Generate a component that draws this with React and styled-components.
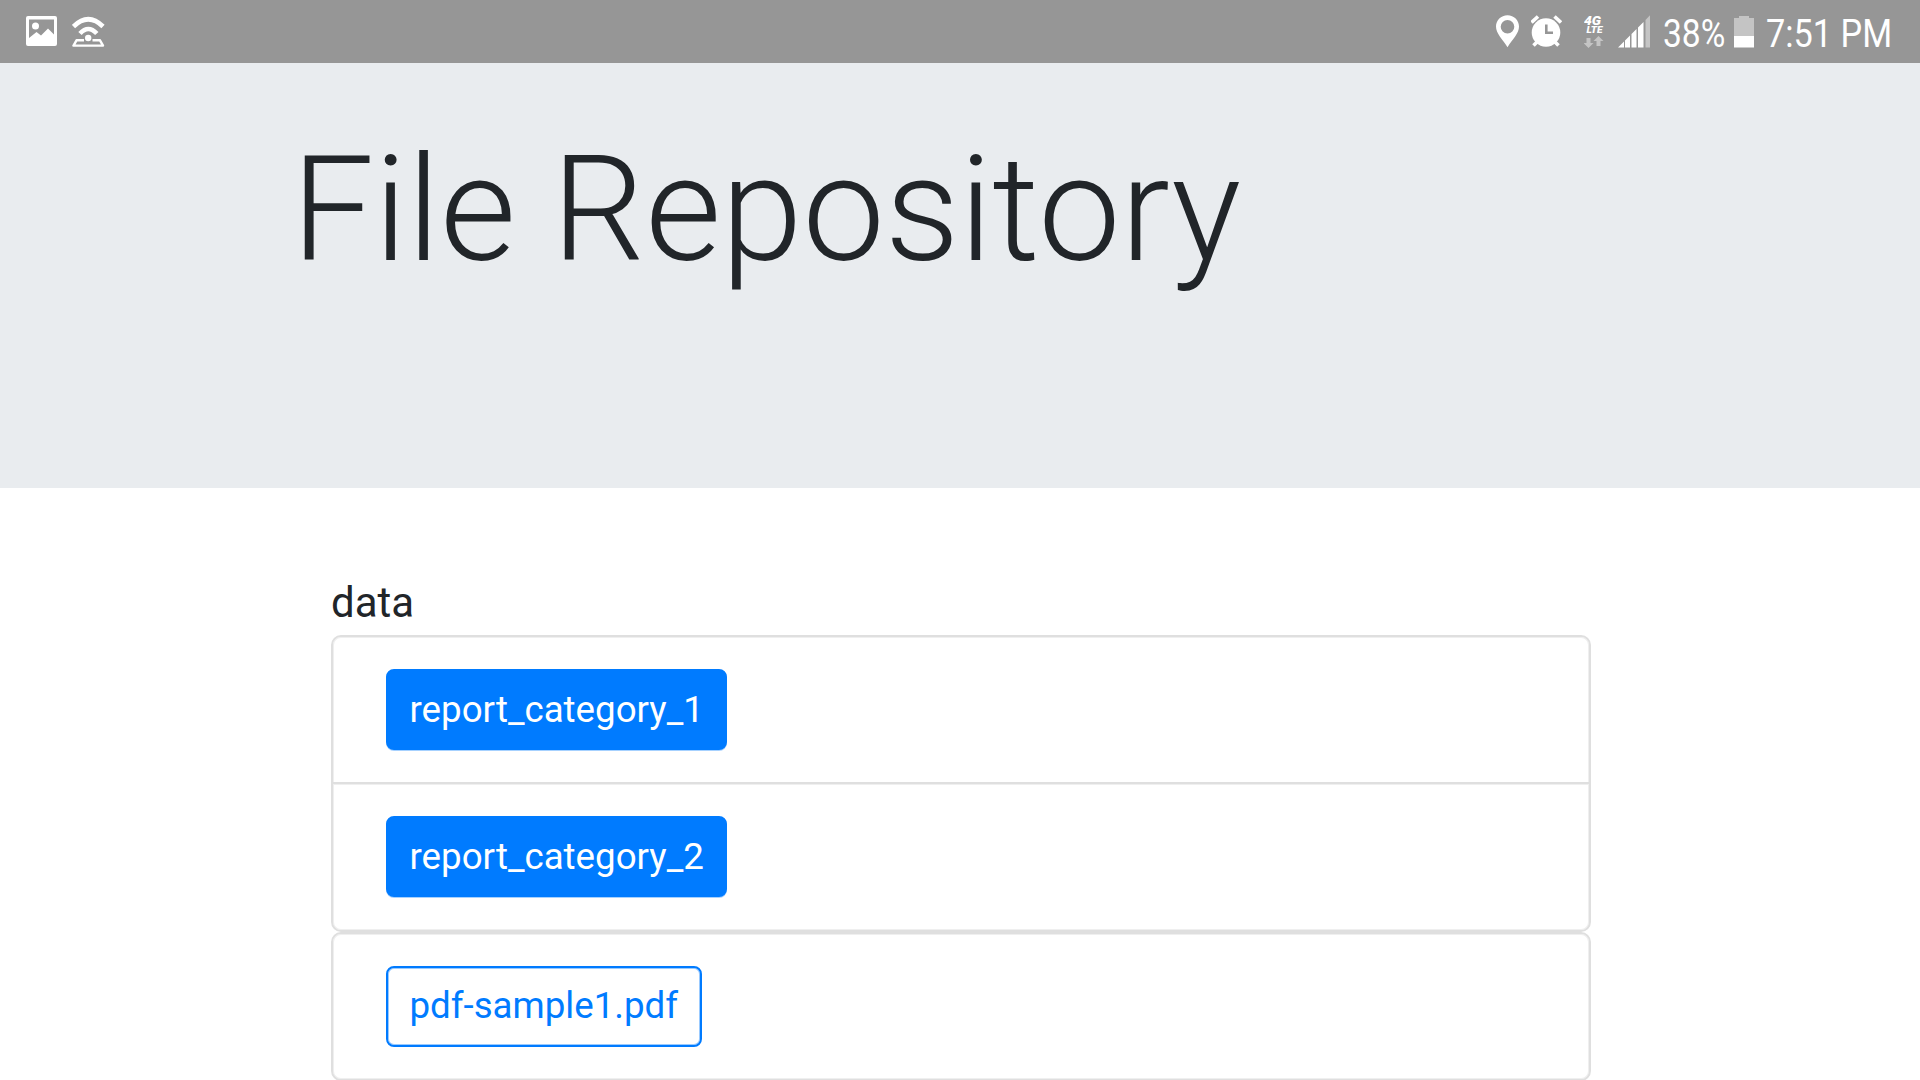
import React from "react";
import styled, { createGlobalStyle } from "styled-components";

const Global = createGlobalStyle`
  *, *::before, *::after { box-sizing: border-box; }
  html, body { margin: 0; padding: 0; background: #fff; overflow: hidden; }
  body { font-family: Roboto, "Liberation Sans", sans-serif; color: #212529; }
`;

const Screen = styled.div`
  width: 1920px;
  height: 1080px;
  overflow: hidden;
  background: #fff;
`;

const StatusBar = styled.header`
  height: 63px;
  padding: 0 28px 0 26px;
  background: #969696;
  color: #fff;
  display: flex;
  justify-content: space-between;
`;

const Group = styled.div`
  display: flex;
  align-items: flex-start;
`;

const Icon = styled.svg`
  display: block;
  flex: none;
  height: 63px;
  width: ${(p) => p.$w}px;
  margin-left: ${(p) => p.$gap || 0}px;
`;

const StatusText = styled.span`
  display: block;
  width: ${(p) => p.$w}px;
  margin-left: ${(p) => p.$gap}px;
  font-size: 39.5px;
  line-height: 68px;
  white-space: nowrap;

  span {
    display: inline-block;
    transform: scaleX(${(p) => p.$squeeze});
    transform-origin: left;
  }
`;

const Jumbotron = styled.section`
  height: 425px;
  padding: 59px 0 0 291.5px;
  background: #e9ecef;
`;

const Title = styled.h1`
  margin: 0;
  font-size: 146.9px;
  font-weight: 300;
  line-height: 176px;
  white-space: nowrap;
`;

const Content = styled.main`
  width: 1260px;
  margin: 0 0 0 331px;
  padding-top: 90px;
`;

const Heading = styled.h5`
  margin: 0;
  padding-bottom: 7px;
  font-size: 42px;
  font-weight: 400;
  line-height: 50px;
`;

const Card = styled.ul`
  margin: 0;
  padding: 0;
  list-style: none;
  border: 2px solid #dfdfdf;
  border-radius: 10px;
  box-shadow: inset 0 0 0 1px #efefef;
`;

const Row = styled.li`
  height: ${(p) => p.$h}px;
  padding: 32px 53px;
  display: flex;
  align-items: flex-start;

  & + & {
    border-top: 2px solid #dfdfdf;
    box-shadow: inset 0 1px 0 #efefef;
  }
`;

const Button = styled.a`
  height: 81px;
  padding: 0 21.5px;
  border: 2px solid #007bff;
  border-radius: 8px;
  background: ${(p) => (p.$outline ? "transparent" : "#007bff")};
  box-shadow: ${(p) => (p.$outline ? "inset 0 0 0 1px rgba(0, 123, 255, 0.4)" : "0 1px 0 rgba(0, 123, 255, 0.35)")};
  color: ${(p) => (p.$outline ? "#007bff" : "#fff")};
  font-size: 36.7px;
  line-height: ${(p) => (p.$outline ? 75 : 77)}px;
  white-space: nowrap;
`;

const PictureIcon = () => (
  <Icon $w={31} viewBox="26 0 31 63">
    <path fill="#fff" fillRule="evenodd" d="M28 16h27a2 2 0 0 1 2 2v26a2 2 0 0 1-2 2h-27a2 2 0 0 1-2-2v-26a2 2 0 0 1 2-2zM29 19.500v18.500l7.500-6 4.500 3.500 7-7 6 6V19.500z" />
    <circle cx="35.500" cy="26" r="3.500" fill="#fff" />
  </Icon>
);

const HotspotIcon = () => (
  <Icon $w={33} $gap={15} viewBox="72 0 33 63" fill="none" stroke="#fff">
    <path strokeWidth="4.600" d="M73.500 26.500Q88.300 12 103 26.500" />
    <path strokeWidth="4.600" d="M80 33.500Q88.300 24.500 96.800 33.500" />
    <path strokeWidth="2.400" strokeLinejoin="round" d="M84 40.300H76.500L73.500 45.600H103L100 40.300H92.500" />
    <circle cx="88.200" cy="38" r="3.200" fill="#fff" stroke="none" />
  </Icon>
);

const PinIcon = () => (
  <Icon $w={23} viewBox="1496 0 23 63">
    <path fill="#fff" fillRule="evenodd" d="M1507.500 15.300c6.500 0 11.500 5 11.500 11.300 0 7-6 12-11.500 20.700-5.500-8.700-11.500-13.700-11.500-20.700 0-6.300 5-11.300 11.500-11.300zM1507.500 20a6.800 6.800 0 1 0 0 13.600 6.800 6.800 0 0 0 0-13.600z" />
  </Icon>
);

const AlarmIcon = () => (
  <Icon $w={31} $gap={12} viewBox="1531 0 31 63">
    <circle cx="1546" cy="32.500" r="14.300" fill="#fff" />
    <path fill="none" stroke="#fff" strokeWidth="3.600" d="M1531.500 22.500l6.500-6M1554.500 16.500l6.500 6M1537.500 41.500l-4 4M1554.500 41.500l4 4" />
    <path fill="none" stroke="#969696" strokeWidth="2.600" d="M1546.300 24.500v8.200h6.700" />
  </Icon>
);

const NetworkIcon = () => (
  <Icon $w={20} $gap={22} viewBox="1584 0 20 63" fontFamily="Roboto, sans-serif" fontWeight="900" fontStyle="italic" fill="#fff">
    <text fontSize="13.500">
      <tspan x="1584" y="25.300" textLength="17" lengthAdjust="spacingAndGlyphs">4G</tspan>
      <tspan x="1586.500" y="33" fontSize="9.200" textLength="16" lengthAdjust="spacingAndGlyphs">LTE</tspan>
    </text>
    <path fill="#c4c4c4" d="M1586.500 38h4v5h3l-5 5-5-5h3zM1596.500 46v-5h-3l5-5 5 5h-3v5z" />
  </Icon>
);

const SignalIcon = () => (
  <Icon $w={32} $gap={14} viewBox="1618 0 32 63">
    <path fill="#fff" d="M1618 47.500l6-6v6zM1625 40.500l5-5v12h-5zM1631.500 34l5-5v18.500h-5zM1638 27.500l5.500-5.500v25.500h-5.500z" />
    <path fill="#c4c4c4" d="M1645.500 20l4.500-4.800v32.300h-4.500z" />
  </Icon>
);

const BatteryIcon = () => (
  <Icon $w={20} viewBox="1734 0 20 63">
    <path fill="#c4c4c4" d="M1739 16h10v2h5v18h-20V18h5z" />
    <path fill="#fff" d="M1734 36h20v11.500h-20z" />
  </Icon>
);

const folders = ["report_category_1", "report_category_2"];

export default function App() {
  return (
    <Screen>
      <Global />
      <StatusBar>
        <Group>
          <PictureIcon />
          <HotspotIcon />
        </Group>
        <Group>
          <PinIcon />
          <AlarmIcon />
          <NetworkIcon />
          <SignalIcon />
          <StatusText $w={71} $gap={13} $squeeze={0.85}><span>38%</span></StatusText>
          <BatteryIcon />
          <StatusText $w={126} $gap={12} $squeeze={0.868}><span>7:51 PM</span></StatusText>
        </Group>
      </StatusBar>
      <Jumbotron>
        <Title>File Repository</Title>
      </Jumbotron>
      <Content>
        <Heading>data</Heading>
        <Card>
          {folders.map((name, i) => (
            <Row key={name} $h={i ? 147.5 : 145}>
              <Button>{name}</Button>
            </Row>
          ))}
        </Card>
        <Card>
          <Row $h={145}>
            <Button $outline>pdf-sample1.pdf</Button>
          </Row>
        </Card>
      </Content>
    </Screen>
  );
}
